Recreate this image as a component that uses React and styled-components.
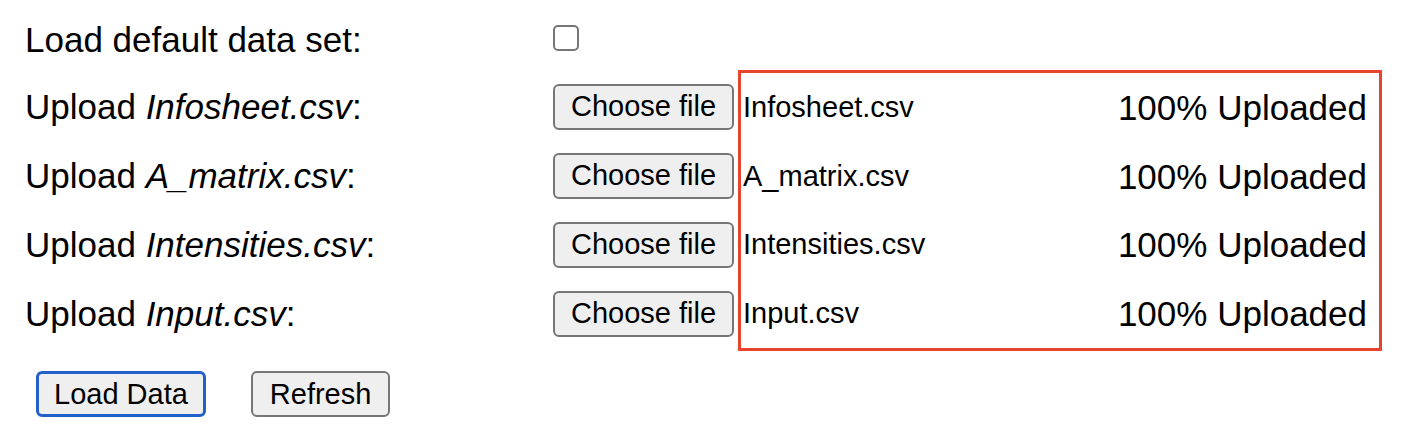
import React from "react";
import styled, { createGlobalStyle } from "styled-components";

const GlobalStyle = createGlobalStyle`
  body {
    margin: 0;
    background: #fff;
    color: #000;
    font-family: "Liberation Sans", Helvetica, Arial, sans-serif;
  }
`;

const Form = styled.div`
  display: grid;
  grid-template-columns: 528px 185px 644px;
  grid-template-rows: 68px repeat(4, 69px);
  align-items: center;
  padding: 4px 0 0 25px;
`;

const Label = styled.div`
  font-size: 35px;
  line-height: 1;
  white-space: nowrap;
  margin-top: ${props => (props.first ? "3px" : "0")};
`;

const FileName = styled.em`
  font-style: italic;
`;

const CheckBox = styled.input`
  appearance: none;
  width: 26px;
  height: 26px;
  margin: 0;
  border: 2px solid #767676;
  border-radius: 5px;
  background: #fff;
  justify-self: start;
  box-sizing: border-box;
`;

const Button = styled.button`
  box-sizing: border-box;
  height: 46px;
  padding: 0 ${props => props.pad || "16px"};
  font-family: inherit;
  font-size: 29px;
  line-height: 1;
  color: #000;
  background: #efefef;
  border: ${props => (props.focused ? "3px solid #2361c8" : "2px solid #767676")};
  border-radius: 6px;
  white-space: nowrap;
`;

const ChooseButton = styled(Button)`
  justify-self: start;
  width: 181px;
  padding: 0;
`;

const StatusBox = styled.div`
  grid-column: 3;
  grid-row: 2 / span 4;
  align-self: stretch;
  margin: -2px 0 -3px 0;
  border: 3px solid #e8432d;
  display: flex;
  flex-direction: column;
  padding: 0 12px 0 2px;
`;

const StatusRow = styled.div`
  flex: 1;
  display: flex;
  align-items: center;
  justify-content: space-between;
`;

const Picked = styled.span`
  font-size: 29px;
  line-height: 1;
`;

const Progress = styled.span`
  font-size: 35px;
  line-height: 1;
`;

const Actions = styled.div`
  display: flex;
  gap: 45px;
  padding: 23px 0 0 36px;
`;

const files = ["Infosheet.csv", "A_matrix.csv", "Intensities.csv", "Input.csv"];

export default function App() {
  return (
    <>
      <GlobalStyle />
      <Form>
        <Label first>Load default data set:</Label>
        <CheckBox type="checkbox" />
        <div />
        {files.map((f, i) => (
          <React.Fragment key={f}>
            <Label style={{ gridRow: i + 2 }}>
              Upload <FileName>{f}</FileName>:
            </Label>
            <ChooseButton style={{ gridRow: i + 2, gridColumn: 2 }}>Choose file</ChooseButton>
          </React.Fragment>
        ))}
        <StatusBox>
          {files.map(f => (
            <StatusRow key={f}>
              <Picked>{f}</Picked>
              <Progress>100% Uploaded</Progress>
            </StatusRow>
          ))}
        </StatusBox>
      </Form>
      <Actions>
        <Button focused pad="15px">Load Data</Button>
        <Button pad="17px">Refresh</Button>
      </Actions>
    </>
  );
}
